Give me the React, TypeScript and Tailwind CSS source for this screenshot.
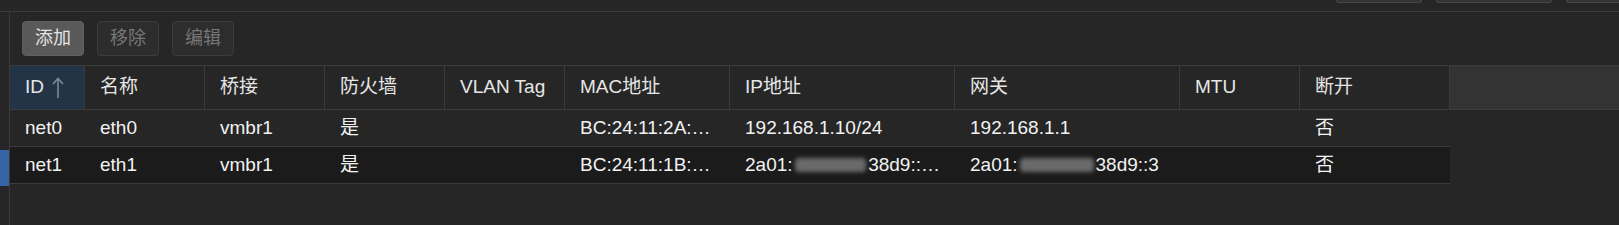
import React from "react";

const font = { fontFamily: '"Liberation Sans", "Noto Sans CJK SC", sans-serif' };

type Col = { key: string; label: string; w: string };

const cols: Col[] = [
  { key: "id", label: "ID", w: "w-[75px]" },
  { key: "name", label: "名称", w: "w-[120px]" },
  { key: "bridge", label: "桥接", w: "w-[120px]" },
  { key: "fw", label: "防火墙", w: "w-[120px]" },
  { key: "vlan", label: "VLAN Tag", w: "w-[120px]" },
  { key: "mac", label: "MAC地址", w: "w-[165px]" },
  { key: "ip", label: "IP地址", w: "w-[225px]" },
  { key: "gw", label: "网关", w: "w-[225px]" },
  { key: "mtu", label: "MTU", w: "w-[120px]" },
  { key: "dis", label: "断开", w: "w-[150px]" },
];

function Blur({ w }: { w: string }) {
  return (
    <span className={`inline-block ${w} h-[16px] align-middle relative`}>
      <span className="absolute inset-x-[2px] top-[1px] bottom-[1px] bg-[#6a6a6a] blur-[2px] rounded-sm" />
    </span>
  );
}

const rows: Record<string, React.ReactNode>[] = [
  {
    id: "net0",
    name: "eth0",
    bridge: "vmbr1",
    fw: "是",
    vlan: "",
    mac: "BC:24:11:2A:…",
    ip: "192.168.1.10/24",
    gw: "192.168.1.1",
    mtu: "",
    dis: "否",
  },
  {
    id: "net1",
    name: "eth1",
    bridge: "vmbr1",
    fw: "是",
    vlan: "",
    mac: "BC:24:11:1B:…",
    ip: (
      <>
        2a01:
        <Blur w="w-[78px]" />
        38d9::…
      </>
    ),
    gw: (
      <>
        2a01:
        <Blur w="w-[78px]" />
        38d9::3
      </>
    ),
    mtu: "",
    dis: "否",
  },
];

function UpArrow() {
  return (
    <svg width="12" height="22" viewBox="0 0 12 22" className="ml-[8px]">
      <path d="M6 1.5 V21" stroke="#7d8a98" strokeWidth="1.6" fill="none" />
      <path d="M1 7 L6 1.5 L11 7" stroke="#7d8a98" strokeWidth="1.6" fill="none" />
    </svg>
  );
}

export default function App() {
  return (
    <div className="w-[1619px] h-[225px] bg-[#262626] flex flex-col overflow-hidden" style={font}>
      {/* top bar with cut-off buttons */}
      <div className="h-[12px] border-b border-[#3b3b3b] flex justify-end items-start gap-[14px] overflow-hidden">
        <div className="w-[86px] h-[3px] bg-[#333333] border-x border-b border-[#474747] rounded-b-[3px]" />
        <div className="w-[116px] h-[3px] bg-[#333333] border-x border-b border-[#474747] rounded-b-[3px]" />
        <div className="w-[53px] h-[3px] bg-[#333333] border-l border-b border-[#474747] rounded-bl-[3px]" />
      </div>
      <div className="flex flex-1">
        {/* sidebar edge */}
        <div className="w-[10px] border-r border-[#3b3b3b] flex flex-col">
          <div className="h-[138px]" />
          <div className="h-[36px] w-[9px] bg-[#3563a6]" />
        </div>
        <div className="flex-1 flex flex-col">
          {/* toolbar */}
          <div className="h-[53px] flex items-start pt-[9px] pl-[12px] gap-[13px]">
            <button className="h-[35px] w-[62px] rounded-[4px] bg-[#595959] border border-[#606060] text-[18px] text-[#e4e4e4] flex items-center justify-center">
              添加
            </button>
            <button className="h-[35px] w-[62px] rounded-[4px] bg-[#2d2d2d] border border-[#3c3c3c] text-[18px] text-[#777777] flex items-center justify-center">
              移除
            </button>
            <button className="h-[35px] w-[62px] rounded-[4px] bg-[#2d2d2d] border border-[#3c3c3c] text-[18px] text-[#777777] flex items-center justify-center">
              编辑
            </button>
          </div>
          {/* header */}
          <div className="h-[45px] border-y border-[#3b3b3b] flex bg-[#333333]">
            {cols.map((c) => (
              <div
                key={c.key}
                className={`${c.w} shrink-0 h-full border-r border-[#3b3b3b] flex items-center px-[15px] text-[19px] text-[#e6e6e6] whitespace-nowrap ${
                  c.key === "id" ? "bg-[#233447]" : "bg-[#262626]"
                }`}
              >
                <span>{c.label}</span>
                {c.key === "id" && <UpArrow />}
              </div>
            ))}
          </div>
          {/* rows */}
          {rows.map((r, i) => (
            <div
              key={i}
              className={`w-[1440px] h-[37px] border-b border-[#3b3b3b] flex ${
                i === 1 ? "bg-[#1b1b1b]" : "bg-[#262626]"
              }`}
            >
              {cols.map((c) => (
                <div
                  key={c.key}
                  className={`${c.w} shrink-0 h-full flex items-center px-[15px] text-[19px] text-[#f2f2f2] whitespace-nowrap overflow-hidden`}
                >
                  {r[c.key]}
                </div>
              ))}
            </div>
          ))}
        </div>
      </div>
    </div>
  );
}
